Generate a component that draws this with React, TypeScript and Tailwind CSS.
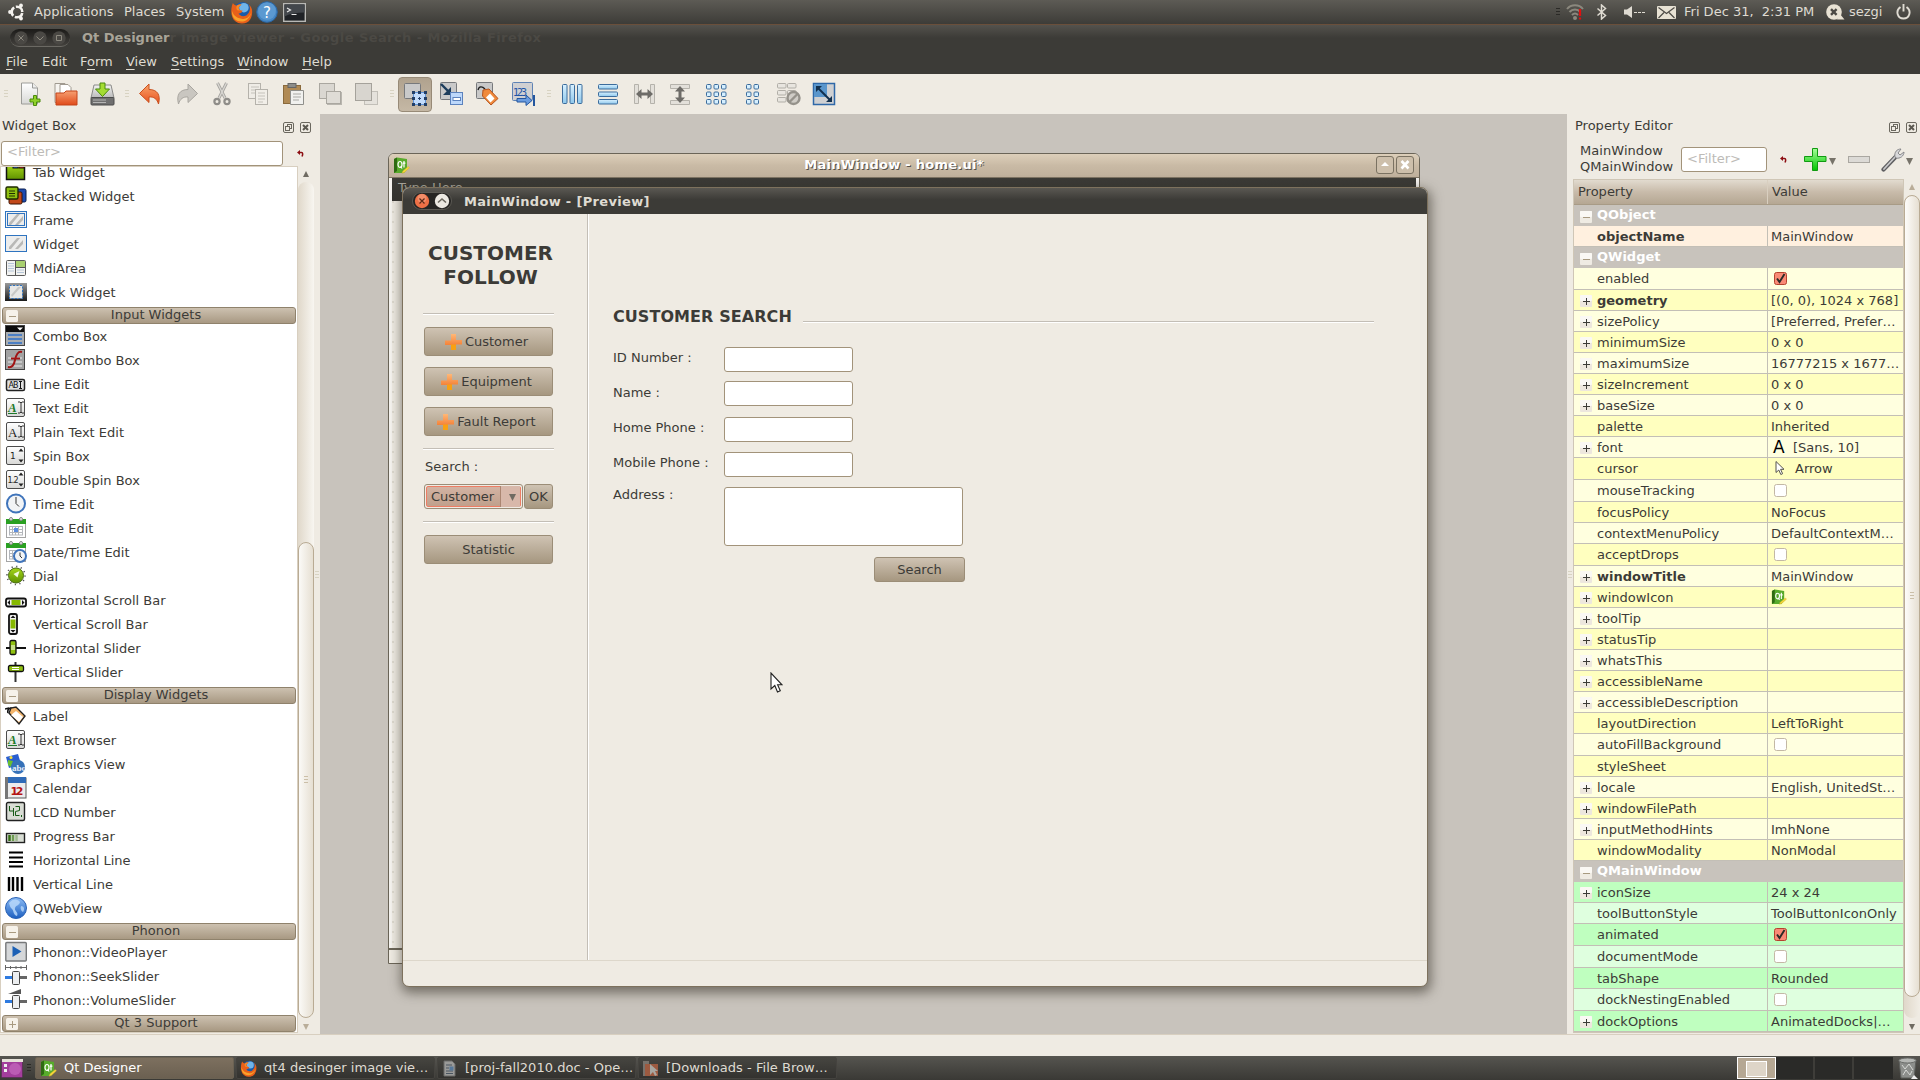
import React from "react";

type Kids = { children?: React.ReactNode };

/* ---------- drawing helpers ---------- */

function Svg({ w, h, children, className = "" }: Kids & { w: number; h: number; className?: string }) {
  return (
    <svg width={w} height={h} viewBox={`0 0 ${w} ${h}`} className={"block shrink-0 " + className}>
      {children}
    </svg>
  );
}

function Defs() {
  const grad = (id: string, a: string, b: string) => (
    <linearGradient id={id} x1="0" y1="0" x2="0" y2="1">
      <stop offset="0" stopColor={a} />
      <stop offset="1" stopColor={b} />
    </linearGradient>
  );
  return (
    <svg width="0" height="0" className="absolute">
      <defs>
        {grad("gOrange", "#f9a56b", "#e8501e")}
        {grad("gFolder", "#f6a072", "#e04a1a")}
        {grad("gGrey", "#f2f2f2", "#b9b9b9")}
        {grad("gGreen", "#a5d61a", "#5f9200")}
        {grad("gBlue", "#8cbcf5", "#1c5fc0")}
        {grad("gCyan", "#d9f1ff", "#8fc8ec")}
        {grad("gPlus", "#a6ff9a", "#00c400")}
        {grad("gPlusO", "#ffb877", "#ef6a1c")}
        {grad("gPaper", "#ffffff", "#d8d8d6")}
        {grad("gDark", "#9a9a9a", "#1a1a1a")}
      </defs>
    </svg>
  );
}

function Handle({ className = "", tone = "#d8d3c2" }: { className?: string; tone?: string }) {
  return (
    <Svg w={4} h={8} className={className}>
      <path d="M0 .5h4M0 3.5h4M0 6.5h4" stroke={tone} />
    </Svg>
  );
}

function Firefox({ s }: { s: number }) {
  return (
    <svg width={s} height={s} viewBox="0 0 24 24" className="block shrink-0">
      <circle cx="13" cy="10" r="9" fill="#1c5aa8" />
      <circle cx="14.500" cy="7" r="5" fill="#6fb4ea" />
      <path d="M2 5c-2 8 0 18 10 18.500C20 24 24 17 23 9c-1-3-2-4-3-5 2 5 0 9-3 11-4 2-7 0-8-2 2 0 4-1 4-3-2 0-4-1-4-3 1-2 2-2 3-3-2-1-4 0-5 1C5 4 4 4 3 2z" fill="#e8601a" />
      <path d="M2 10c0 7 3 11.500 10 11.500 5 0 9-4 10-9-2 5-6 7-10 6C6 18 3 14 2 10z" fill="#f9a32a" />
      <path d="M9 7c1-2 2-2 3-3-2-1-4 0-5 1-1 3 0 5 2 5 2 0 3 0 4 0-2 0-4-1-4-3z" fill="#f68a26" />
    </svg>
  );
}

function QtIcon({ s }: { s: number }) {
  return (
    <svg width={s} height={s} viewBox="0 0 17 17" className="block shrink-0">
      <path d="M1 2l3-1.500 10 1.500v10l-3 4H1z" fill="#58ab2c" />
      <path d="M1 2l3-1.500V14l-3 2z" fill="#2e6b12" />
      <ellipse cx="7" cy="7.500" rx="2" ry="3" fill="none" stroke="#fff" strokeWidth="1.200" />
      <path d="M7.500 9.500l1.600 2M11 4v6.500M9.800 6.200h2.600" stroke="#fff" strokeWidth="1.200" fill="none" />
      <path d="M9 16.300l.8-2.300 5.400-4.500 1.300 1.300-5.200 4.700z" fill="#f4d73a" stroke="#c9a92c" strokeWidth=".4" />
    </svg>
  );
}

function FloatBtn() {
  return (
    <Svg w={11} h={11}>
      <rect x=".5" y=".5" width="10" height="10" rx="1.500" fill="none" stroke="#6b685f" />
      <rect x="4.500" y="2.500" width="4" height="4" fill="none" stroke="#6b685f" />
      <rect x="2.500" y="4.500" width="4" height="4" fill="#efebe3" stroke="#6b685f" />
    </Svg>
  );
}
function CloseBtn() {
  return (
    <Svg w={11} h={11}>
      <rect x=".5" y=".5" width="10" height="10" rx="1.500" fill="none" stroke="#6b685f" />
      <path d="M3 3l5 5M8 3l-5 5" stroke="#5b5850" strokeWidth="2" />
    </Svg>
  );
}
function ResetIcon() {
  return (
    <Svg w={7} h={7}>
      <path d="M0 2.500L3 0v5z" fill="#8c0d12" />
      <path d="M2 2.500h2.500c1.500 0 1.500 2 .5 4" stroke="#8c0d12" strokeWidth="1.500" fill="none" />
    </Svg>
  );
}
function Tri({ up, tone, w = 6 }: { up?: boolean; tone: string; w?: number }) {
  return (
    <Svg w={w} h={w}>
      <path d={up ? `M${w / 2} 0L${w} ${w}H0z` : `M0 0H${w}L${w / 2} ${w}z`} fill={tone} />
    </Svg>
  );
}

/* ---------- top panel ---------- */

function TopPanel() {
  return (
    <div className="flex h-[24px] items-center bg-linear-to-b from-[#5d5b55] to-[#3d3c38] text-[#dfdbd2]">
      <Svg w={17} h={18} className="ml-[8px]">
        <circle cx="9" cy="9" r="5.300" fill="none" stroke="#f4f2ee" strokeWidth="2.600" strokeDasharray="9.300 1.800" strokeDashoffset="-1" />
        <circle cx="2" cy="9" r="1.900" fill="#f4f2ee" />
        <circle cx="13" cy="2.500" r="1.900" fill="#f4f2ee" />
        <circle cx="13" cy="15.500" r="1.900" fill="#f4f2ee" />
      </Svg>
      <span className="ml-[9px] w-[90px] pb-px">Applications</span>
      <span className="w-[52px] pb-px">Places</span>
      <span className="w-[54px] pb-px">System</span>
      <Firefox s={23} />
      <Svg w={22} h={22} className="ml-[3px]">
        <circle cx="11" cy="11" r="10.300" fill="#4587c4" stroke="#2b66a4" />
        <circle cx="11" cy="10" r="8.800" fill="#6ba5da" opacity=".6" />
        <text x="11" y="16.500" textAnchor="middle" fontSize="15" fill="#fff">?</text>
      </Svg>
      <Svg w={23} h={19} className="ml-[5px]">
        <rect x=".7" y=".7" width="21.600" height="17.600" fill="#1f2226" stroke="#b8b8b5" strokeWidth="1.400" />
        <path d="M1.500 1.500h20v8c-8 0-14 1-20 4z" fill="#43474c" />
        <path d="M4 5l3.500 2L4 9M8.500 11.500h5" stroke="#e8e8e8" fill="none" strokeWidth="1.200" />
      </Svg>
      <div className="ml-auto flex items-center">
        <Handle tone="#2b2a27" />
        <Svg w={18} h={16} className="ml-[6px]">
          <path d="M1 5c4-5 12-5 16 0M3.500 8c3-3.500 8-3.500 11 0M6 11c2-2 4-2 6 0" stroke="#8b887e" strokeWidth="2" fill="none" />
          <circle cx="9" cy="14" r="2" fill="#8b887e" />
          <path d="M14 5v7M14 13.500v2" stroke="#e01010" strokeWidth="2.200" />
        </Svg>
        <Svg w={11} h={16} className="ml-[12px]">
          <path d="M1.500 4.500l8 7L5.500 15V1l4 3.500-8 7" stroke="#dfdbd2" strokeWidth="1.500" fill="none" />
        </Svg>
        <Svg w={22} h={12} className="ml-[17px]">
          <path d="M0 3.500h3L8 0v12L3 8.500H0z" fill="#dfdbd2" />
          <path d="M10 6.500h3M14 6.500h3M18 6.500h3" stroke="#dfdbd2" />
        </Svg>
        <Svg w={19} h={13} className="ml-[11px]">
          <rect width="19" height="13" rx="1" fill="#e8e2d4" />
          <path d="M1.500 1.500l8 6 8-6M1.500 12l5.500-5.500M17.500 12L12 6.500" stroke="#4c4a45" strokeWidth="1.200" fill="none" />
        </Svg>
        <span className="ml-[8px] w-[142px] whitespace-pre pb-px">Fri Dec 31,  2:31 PM</span>
        <Svg w={19} h={16}>
          <circle cx="8" cy="8" r="7.800" fill="#e8e2d4" />
          <path d="M11 15.500h7.500L14 10z" fill="#e8e2d4" />
          <path d="M5 5.200l5.600 5.600M10.600 5.200L5 10.800" stroke="#4c4a45" strokeWidth="2.400" />
        </Svg>
        <span className="ml-[4px] w-[47px] pb-px">sezgi</span>
        <Svg w={15} h={16} className="mr-[9px]">
          <path d="M4.500 3C-1 7 1.500 14.500 7.500 14.500S16 7 10.500 3M7.500 0v7.500" stroke="#dfdbd2" strokeWidth="1.900" fill="none" />
        </Svg>
      </div>
    </div>
  );
}

function TitleBar() {
  return (
    <div className="flex h-[27px] items-center border-t border-[#6a4f3b] bg-linear-to-b from-[#54524d] to-[#3c3b37] to-50% font-bold">
      <div className="ml-[10px] flex h-[18px] w-[60px] items-center justify-around rounded-full border-b border-[#6b6963] bg-linear-to-b from-[#1c1b19] to-[#44423e] px-[1px]">
        {["M4 4l5 5M9 4l-5 5", "M3 5l3.500 3.500L10 5", "M4 4h5v5h-5z"].map((d) => (
          <Svg key={d} w={14} h={14}>
            <circle cx="7" cy="7" r="6.700" fill="#4a4844" />
            <path d={d} stroke="#8c897f" fill="none" transform="translate(.5 .5)" />
          </Svg>
        ))}
      </div>
      <span className="ml-[12px] text-[#a8a498]">Qt Designer</span>
      <span className="whitespace-pre tracking-[0.42px] text-[#4b4944]">r image viewer - Google Search - Mozilla Firefox</span>
    </div>
  );
}

const menus: [string, string, string, string][] = [
  ["", "F", "ile", "w-[36px]"],
  ["Ed", "", "it", "w-[38px]"],
  ["F", "o", "rm", "w-[46px]"],
  ["", "V", "iew", "w-[45px]"],
  ["", "S", "ettings", "w-[66px]"],
  ["", "W", "indow", "w-[65px]"],
  ["", "H", "elp", "w-[60px]"],
];

function MenuBar() {
  return (
    <div className="flex h-[23px] items-center bg-[#3c3b37] pb-px pl-[6px] text-[#dfdbd2]">
      {menus.map(([a, u, b, w]) => (
        <span key={a + u + b} className={w}>
          {a}
          <span className="underline underline-offset-[3px]">{u}</span>
          {b}
        </span>
      ))}
    </div>
  );
}

/* ---------- tool bar ---------- */

const greySheet = (x: number, y: number, w = 16, h = 16) => (
  <rect x={x + 0.5} y={y + 0.5} width={w} height={h} rx="1" fill="#c9c9c9" stroke="#77797c" />
);
const bars = (v: boolean, tone = "#3c6c9c", fill = "url(#gCyan)") =>
  [0, 1, 2].map((i) => (
    <rect key={i} x={v ? 2.5 + i * 7.5 : 2.5} y={v ? 2.5 : 2.5 + i * 7.5} width={v ? 4.5 : 19} height={v ? 19 : 4.5} rx="1" fill={fill} stroke={tone} />
  ));
const cells = (cols: number, x0: number) =>
  Array.from({ length: cols * 3 }, (_, k) => (
    <rect key={k} x={x0 + (k % cols) * 7.5} y={2.5 + Math.floor(k / cols) * 7.5} width="4.500" height="4.500" rx="1" fill="#d5efff" stroke="#3c6c9c" />
  ));

const tools: Record<string, React.ReactNode> = {
  newFile: (
    <>
      <path d="M3.500 1h11l5 5v16h-16z" fill="url(#gPaper)" stroke="#9c9c98" />
      <path d="M14.500 1v5h5" fill="#eee" stroke="#9c9c98" />
      <path d="M15.500 13.500h3v3.500H22v3h-3.500v3.500h-3V20H12v-3h3.500z" fill="#8fd12a" stroke="#4b8a0c" />
    </>
  ),
  open: (
    <>
      <path d="M1 1.500h10l3 3v16H1z" fill="#f6f4f0" stroke="#a09a90" />
      <path d="M6 2.500h8l3 3v10H6z" fill="#fff" stroke="#a09a90" />
      <path d="M2 23V11h8l2-2h11v14z" fill="url(#gFolder)" stroke="#c4451a" />
    </>
  ),
  save: (
    <>
      <path d="M4 3h17l3 13H1z" fill="url(#gGrey)" stroke="#8a8a88" />
      <rect x="1" y="15.500" width="23" height="7.500" rx="1" fill="#6f6f6f" stroke="#4c4c4c" />
      <path d="M3 18h13M3 20.500h13" stroke="#b5b5b5" />
      <path d="M10 1h5v6h4.500l-7 7.500-7-7.500H10z" fill="#a4dc32" stroke="#4b8a0c" />
    </>
  ),
  undo: <path d="M11 2v5.500c8 0 12 5 9.500 14.500C19 17 16 14.500 11 15v5.500L1.500 11.500z" fill="url(#gOrange)" stroke="#c9501e" />,
  redo: <path d="M14 2v5.500c-8 0-12 5-9.500 14.500C6 17 9 14.500 14 15v5.500l9.500-9z" fill="#c9c6c0" stroke="#a9a6a0" />,
  cut: (
    <>
      <path d="M7.500 1l7.500 15M16.500 1L9 16" stroke="#a8a6a1" strokeWidth="3" />
      <path d="M7.500 1l7.500 15M16.500 1L9 16" stroke="#dad8d4" strokeWidth="1.200" />
      <circle cx="7" cy="19.500" r="2.600" fill="none" stroke="#8f8d89" strokeWidth="2.200" />
      <circle cx="17" cy="19.500" r="2.600" fill="none" stroke="#8f8d89" strokeWidth="2.200" />
    </>
  ),
  copy: (
    <>
      <rect x="2.500" y="1.500" width="12" height="15" fill="#efece6" stroke="#b5b2ab" />
      <path d="M5 5h8M5 8h8M5 11h4" stroke="#c5c2bb" />
      <rect x="9.500" y="7.500" width="12" height="15" fill="#f1eee8" stroke="#b5b2ab" />
      <path d="M12 11h7M12 14h7M12 17h7M12 20h5" stroke="#c5c2bb" />
    </>
  ),
  paste: (
    <>
      <rect x="1.500" y="3.500" width="17" height="18" fill="#b08a55" stroke="#8a6a3c" />
      <rect x="6" y="1.500" width="8" height="4" fill="#8d8d8a" stroke="#666" />
      <path d="M8.500 8.500h13v14h-13z" fill="#f1f1ef" stroke="#8f8f8b" />
      <path d="M11 12h8M11 15h8M11 18h6" stroke="#a9a9a5" />
    </>
  ),
  raise: (
    <>
      <rect x="9.500" y="10.500" width="14" height="12" fill="#e5e2dc" stroke="#b9b6af" />
      <rect x="1.500" y="1.500" width="15" height="15" fill="#dad7d1" stroke="#aaa7a0" />
      <rect x="8.500" y="9.500" width="14" height="12" fill="#dfdcd6" stroke="#aaa7a0" />
    </>
  ),
  lower: (
    <>
      <rect x="10.500" y="9.500" width="13" height="13" fill="#e5e2dc" stroke="#c2bfb8" />
      <rect x="1.500" y="1.500" width="16" height="17" fill="#d8d5cf" stroke="#a5a29b" />
    </>
  ),
  editWidgets: (
    <>
      {greySheet(1, 1, 16, 15)}
      <rect x="10.500" y="10.500" width="12" height="12" fill="#c3dcfb" stroke="#5f93d8" />
      <path d="M16.500 15v3M15 16.500h3" stroke="#24406c" />
      {[[9, 9], [15, 9], [21, 9], [9, 15], [21, 15], [9, 21], [15, 21], [21, 21]].map(([x, y]) => (
        <rect key={x + "-" + y} x={x} y={y} width="3" height="3" fill="#233f66" />
      ))}
    </>
  ),
  signals: (
    <>
      {greySheet(1, 0, 16, 17)}
      <path d="M2 2l8 8" stroke="#1d3d5c" strokeWidth="2.400" />
      <path d="M12 5v8H4z" fill="#1d3d5c" />
      <rect x="11.500" y="10.500" width="12" height="12" fill="#bdd8fb" stroke="#5c82bd" />
      <rect x="14" y="15.500" width="7.500" height="3" fill="#fff" stroke="#5c82bd" />
    </>
  ),
  buddies: (
    <>
      {greySheet(1, 0, 16, 16)}
      <path d="M3 8c1-4 4-4 7-1" stroke="#222" fill="none" strokeWidth="1.400" />
      <path d="M8 8l6-1 9 9.500-7 6.500-8.500-9z" fill="#f08a3c" stroke="#b5531c" />
      <path d="M15 11.500l4.500 5-4 4-4.500-5z" fill="#fff" />
    </>
  ),
  tabOrder: (
    <>
      <rect x="1.500" y=".5" width="20" height="18" rx="1" fill="#d0d0d2" stroke="#5f83b5" />
      <text x="2" y="14" fontSize="10" fill="#1f55a8" textLength="14">123</text>
      <path d="M6 16.500h9V13l6 5.500-6 5V20H6z" fill="#6a9ce0" stroke="#24569e" />
      <path d="M23 13v11" stroke="#24569e" strokeWidth="2" />
    </>
  ),
  hLayout: bars(true),
  vLayout: bars(false),
  hSplit: (
    <>
      <path d="M2.500 2.500h4v19h-4zM18.500 2.500h4v19h-4z" fill="#e3e0da" stroke="#b5b2ab" />
      <path d="M4 12l5.500-5v3.500h6V7l5.500 5-5.500 5v-3.500h-6V17z" fill="#6e6c68" />
    </>
  ),
  vSplit: (
    <>
      <path d="M2.500 2.500h19v4h-19zM2.500 18.500h19v4h-19z" fill="#e3e0da" stroke="#b5b2ab" />
      <path d="M12 4l5 5.500h-3.500v6H17L12 21l-5-5.500h3.500v-6H7z" fill="#6e6c68" />
    </>
  ),
  grid: cells(3, 2.5),
  form: cells(2, 6.5),
  breakLayout: (
    <>
      {[0, 7, 14].map((y) =>
        [1, 11].map((x) => <rect key={x + "," + y} x={x + 0.5} y={y + 1.5} width="8.500" height="4.500" rx="1" fill="#e8e5df" stroke="#b1aea7" />),
      )}
      <circle cx="17.500" cy="16" r="6" fill="#cfccc6" stroke="#95928b" strokeWidth="2.400" />
      <path d="M13.500 20l8-8" stroke="#95928b" strokeWidth="2.400" />
    </>
  ),
  adjust: (
    <>
      <rect x="1.500" y="1.500" width="21" height="21" fill="#cfd0d2" stroke="#2f68a8" strokeWidth="1.500" />
      <rect x="2" y="2" width="13" height="13" fill="#5a96cc" />
      <path d="M5 5l14 14" stroke="#12304e" strokeWidth="2" />
      <path d="M4 4h6L4 10zM20 20h-6l6-6z" fill="#12304e" />
    </>
  ),
};

const groups: { names: string[]; gap: string }[] = [
  { names: ["newFile", "open", "save"], gap: "ml-[5px] w-[112px]" },
  { names: ["undo", "redo", "cut", "copy", "paste", "raise", "lower"], gap: "ml-[4px] w-[257px]" },
  { names: ["editWidgets", "signals", "buddies", "tabOrder"], gap: "ml-[4px] w-[149px]" },
  { names: ["hLayout", "vLayout", "hSplit", "vSplit", "grid", "form", "breakLayout", "adjust"], gap: "ml-[4px]" },
];

function ToolBar() {
  return (
    <div className="flex h-[40px] items-center bg-[#efebe3] pl-[4px]">
      {groups.map((g) => (
        <React.Fragment key={g.gap}>
          <Handle />
          <div className={"flex items-center gap-[2px] " + g.gap}>
            {g.names.map((n) => (
              <div
                key={n}
                className={
                  n === "editWidgets"
                    ? "flex h-[35px] w-[34px] items-center justify-center rounded-[4px] border border-[#978a77] bg-linear-to-b from-[#b0a28e] to-[#c5b8a5]"
                    : "flex h-[35px] w-[34px] items-center justify-center"
                }
              >
                <Svg w={25} h={24}>{tools[n]}</Svg>
              </div>
            ))}
          </div>
        </React.Fragment>
      ))}
    </div>
  );
}

/* ---------- widget box ---------- */

const box = <rect x="1.500" y="1.500" width="18" height="18" rx="1.500" fill="url(#gPaper)" stroke="#4c4c4c" />;
const stripes = <path d="M4 14L12 5h3L6 16H4zM10 16L18 7v4l-5 5z" fill="#b9b9b7" />;
const ibeam = <path d="M13 5h2l1 1 1-1h2M13 16h2l1-1 1 1h2M16 6v9" stroke="#333" fill="none" />;
const spin = <path d="M13.500 6.500l2.500-3 2.500 3zM13.500 14.500l2.500 3 2.500-3z" fill="#222" />;
const cal = (
  <>
    <rect x="1.500" y="4.500" width="19" height="16" fill="#fff" stroke="#a5a5a5" />
    <rect x="1" y="2" width="20" height="5" fill="#2aa022" />
    <circle cx="6" cy="2" r="1.500" fill="#eee" stroke="#888" />
    <circle cx="16" cy="2" r="1.500" fill="#eee" stroke="#888" />
    <path d="M4 9.500h14M4 12.500h14M4 15.500h14M4 18h14M4.500 9v9M7.500 9v9M10.500 9v9M13.500 9v9M17.500 9v9" stroke="#b3b6bb" />
  </>
);
const clock = (cx: number, cy: number, r: number) => (
  <>
    <circle cx={cx} cy={cy} r={r} fill="#f2f4f6" stroke="#3f74bb" strokeWidth="2" />
    <path d={`M${cx} ${cy - r + 2.5}V${cy}l${r / 3} ${r / 3}`} stroke="#333" fill="none" />
  </>
);
const slider = (
  <>
    <path d="M0 12.500h8" stroke="#2f7be0" strokeWidth="3" />
    <path d="M14 12.500h8" stroke="#666" strokeWidth="3" />
    <rect x="7.500" y="6.500" width="7" height="13" rx="1" fill="#eceef0" stroke="#444" />
  </>
);
const richText = (
  <>
    {box}
    <text x="3" y="15" fontSize="13" fontStyle="italic" fontFamily="Liberation Serif, serif" fontWeight="bold" fill="#1f7a2c">A</text>
    <path d="M3 16.500h9" stroke="#1f7a2c" />
    {ibeam}
  </>
);

const widgetIcons: Record<string, React.ReactNode> = {
  "Tab Widget": (
    <>
      <rect x="1.500" y="3.500" width="18" height="15" fill="url(#gGreen)" stroke="#111" strokeWidth="1.500" />
      <rect x="8" y="3" width="5" height="4" fill="#2a6ae0" stroke="#111" />
      <rect x="14" y="3" width="5" height="4" fill="#e02020" stroke="#111" />
    </>
  ),
  "Stacked Widget": (
    <>
      <rect x="9" y="4" width="12" height="13" rx="1.500" fill="#1c4ab0" stroke="#0b1d4c" />
      <rect x="4" y="7" width="13" height="12" rx="1.500" fill="#c2481a" stroke="#3c1405" />
      <rect x="1" y="2" width="12" height="12" rx="1.500" fill="#8fc010" stroke="#1e2b00" strokeWidth="1.400" />
      <path d="M4 6h6M4 8.500h6M4 11h6" stroke="#1e3000" />
    </>
  ),
  Frame: (
    <>
      <rect x=".5" y="2.500" width="21" height="16" fill="#f2f2f1" stroke="#2f74c0" />
      <rect x="2.500" y="4.500" width="17" height="12" fill="#ededec" stroke="#2f74c0" />
      {stripes}
    </>
  ),
  Widget: (
    <>
      <rect x=".5" y="2.500" width="21" height="16" fill="#ededec" stroke="#2f74c0" />
      {stripes}
    </>
  ),
  MdiArea: (
    <>
      <rect x="1.500" y="3.500" width="19" height="15" rx="1" fill="#f2f2f0" stroke="#5b5b5b" />
      <rect x="11" y="4" width="9" height="6" fill="#a9d070" />
      <path d="M10.500 4v14M11 10.500h9" stroke="#555" />
      <path d="M3 6.500h6M3 9h6M3 11.500h6M3 14h6M12 13h7M12 15.500h7" stroke="#b5c5d8" />
    </>
  ),
  "Dock Widget": (
    <>
      <rect x="0" y="2" width="22" height="18" fill="url(#gDark)" />
      <rect x="4.500" y="4.500" width="13" height="13" fill="#e8e8e6" stroke="#2f74c0" strokeDasharray="2 1.500" />
      <path d="M6 14l7-8h3l-9 10z" fill="#c9c9c6" />
    </>
  ),
  "Combo Box": (
    <>
      <rect x=".5" y=".5" width="19" height="20" fill="#a9aeb3" stroke="#444" />
      <rect x="1" y="1" width="18" height="6" fill="#0c0c0c" />
      <path d="M12 2.500h6l-3 3z" fill="#fff" />
      <path d="M3 10h14M3 14h14M3 18h14" stroke="#4c7fc4" strokeWidth="2" />
    </>
  ),
  "Font Combo Box": (
    <>
      <rect x=".5" y=".5" width="19" height="20" fill="#a2a2a2" stroke="#444" />
      <path d="M3 9h14M3 13h14M3 17h14" stroke="#c6c6c6" strokeWidth="2" />
      <path d="M17 3c-4-1-6 3-7 8s-3 8-7 7M6 9.500h9" stroke="#a01414" strokeWidth="2" fill="none" />
    </>
  ),
  "Line Edit": (
    <>
      <rect x="1.500" y="6.500" width="18" height="11" rx="1.500" fill="#e0e0e0" stroke="#222" strokeWidth="1.500" />
      <text x="3.500" y="15" fontSize="8" fill="#111" textLength="10">AB</text>
      <path d="M14 8.500h3M15.500 8.500v7M14 15.500h3" stroke="#111" />
    </>
  ),
  "Text Edit": richText,
  "Plain Text Edit": (
    <>
      {box}
      <text x="3" y="15.500" fontSize="13" fontFamily="Liberation Serif, serif" fill="#222">A</text>
      {ibeam}
    </>
  ),
  "Spin Box": (
    <>
      {box}
      <text x="5" y="14" fontSize="9" fill="#222">1</text>
      {spin}
    </>
  ),
  "Double Spin Box": (
    <>
      {box}
      <text x="2.500" y="14" fontSize="8" fill="#222" textLength="11">1.2</text>
      {spin}
    </>
  ),
  "Time Edit": clock(11, 10.5, 9),
  "Date Edit": (
    <>
      {cal}
      <rect x="9" y="11" width="4" height="4" fill="#5e8fe0" />
    </>
  ),
  "Date/Time Edit": (
    <>
      {cal}
      {clock(15, 15, 6)}
    </>
  ),
  Dial: (
    <>
      <circle cx="11" cy="10.500" r="9" fill="none" stroke="#555" strokeWidth="1.600" strokeDasharray="1.200 3.500" />
      <circle cx="11" cy="10.500" r="7.500" fill="url(#gGreen)" stroke="#4a6e12" />
      <path d="M14.500 6l-2 6.500-4-3.500z" fill="#f2fbe0" />
    </>
  ),
  "Horizontal Scroll Bar": (
    <>
      <rect x="1" y="9.500" width="20" height="8" rx="2" fill="#f1f1f1" stroke="#111" strokeWidth="1.800" />
      <rect x="6.500" y="11" width="9" height="5" fill="#86b800" />
      <path d="M5 11v5l-2.500-2.500zM17 11v5l2.500-2.500z" fill="#111" />
    </>
  ),
  "Vertical Scroll Bar": (
    <>
      <rect x="4" y="1" width="8" height="20" rx="2" fill="#f1f1f1" stroke="#111" strokeWidth="1.800" />
      <rect x="5.500" y="6.500" width="5" height="9" fill="#86b800" />
      <path d="M5.500 5h5L8 2.500zM5.500 17h5L8 19.500z" fill="#111" />
    </>
  ),
  "Horizontal Slider": (
    <>
      <path d="M1 11h20" stroke="#111" strokeWidth="2" />
      <rect x="5" y="3.500" width="6" height="14" rx="1.500" fill="#8fc010" stroke="#111" strokeWidth="1.300" />
      <path d="M7 8v5M9 8v5" stroke="#fff" />
    </>
  ),
  "Vertical Slider": (
    <>
      <path d="M10.500 1v20" stroke="#333" strokeWidth="2" />
      <rect x="3.500" y="4.500" width="15" height="6" rx="1.500" fill="#8fc010" stroke="#111" strokeWidth="1.300" />
      <path d="M7 6.500h7M7 8.500h7" stroke="#fff" />
    </>
  ),
  Label: (
    <>
      <path d="M0 4l4-1M3 8c-1-4 2-6 5-4" stroke="#111" strokeWidth="1.600" fill="none" />
      <path d="M4 8l2-5 5-1 9 9-6 8z" fill="#f3b56c" stroke="#222" strokeWidth="1.400" />
      <path d="M11 6l7 6-4 5-8-7z" fill="#fff" />
    </>
  ),
  "Text Browser": richText,
  "Graphics View": (
    <>
      <path d="M1 4l12-3 3 10-12 4z" fill="#2a5fd0" />
      <path d="M3 7l5 1-2 6-3-2z" fill="#6abf30" />
      <circle cx="6" cy="4.500" r="1.500" fill="#f8e03c" />
      <circle cx="13" cy="14" r="7" fill="#3571b8" />
      <text x="7" y="18" fontSize="9" fontFamily="Liberation Serif, serif" fontWeight="bold" fill="#e8eef8">abc</text>
    </>
  ),
  Calendar: (
    <>
      <rect x="1" y="1" width="20" height="20" fill="#ececec" stroke="#5a5a5a" />
      <path d="M0 0h3v22H0z" fill="#777" />
      <rect x="3" y="0" width="18" height="6" fill="#2f6bb8" />
      <text x="5.500" y="18" fontSize="11" fontWeight="bold" fill="#b51414" textLength="13">12</text>
    </>
  ),
  "LCD Number": (
    <>
      <rect x="1.500" y="1.500" width="18" height="18" rx="1.500" fill="#d8dcd4" stroke="#222" strokeWidth="1.400" />
      <path d="M4.500 5v5h4M8.500 7v8M10.500 5.500h4v4l-4 1v4h4M16.500 14v2" stroke="#155a15" fill="none" />
    </>
  ),
  "Progress Bar": (
    <>
      <rect x="1.500" y="8.500" width="18" height="9" fill="#d8ddd4" stroke="#222" strokeWidth="1.400" />
      <path d="M4.500 10v6" stroke="#356d12" strokeWidth="2.500" />
      <path d="M8 10v6" stroke="#6d9c50" strokeWidth="2.500" />
      <path d="M11.500 10v6" stroke="#a0b890" strokeWidth="2.500" />
    </>
  ),
  "Horizontal Line": <path d="M4 3.500h14M4 8.500h14M4 13h14M4 17.500h14" stroke="#000" strokeWidth="2" />,
  "Vertical Line": <path d="M4 4v14M8 4v14M12.500 4v14M17 4v14" stroke="#000" strokeWidth="2.400" />,
  QWebView: (
    <>
      <circle cx="11" cy="11" r="10.500" fill="url(#gBlue)" stroke="#2a62b5" />
      <path d="M4 6c4-5 9-4 11-1-1 4-4 3-5 6s4 4 2 8c-4-1-3-5-5-7S5 9 4 6z" fill="#b8d8fa" opacity=".85" />
      <path d="M16 9c3 0 4 3 2 6-2-1-3-4-2-6z" fill="#b8d8fa" opacity=".8" />
    </>
  ),
  "Phonon::VideoPlayer": (
    <>
      <rect x=".8" y="1.500" width="20.500" height="18.500" rx="1" fill="#d5d7d9" stroke="#77797b" strokeWidth="1.400" />
      <path d="M7.500 5l9 5.500-9 5.500z" fill="#1c60b5" />
    </>
  ),
  "Phonon::SeekSlider": (
    <>
      <path d="M0 2.500h22M.5 0v5M5.500 1v3M11 1v3M16 1v3M21.500 0v5" stroke="#666" fill="none" />
      {slider}
    </>
  ),
  "Phonon::VolumeSlider": (
    <>
      <path d="M3 5l13-5v5z" fill="#555" />
      {slider}
    </>
  ),
};

const widgetList = [
  "Tab Widget", "Stacked Widget", "Frame", "Widget", "MdiArea", "Dock Widget",
  "-Input Widgets", "Combo Box", "Font Combo Box", "Line Edit", "Text Edit", "Plain Text Edit", "Spin Box",
  "Double Spin Box", "Time Edit", "Date Edit", "Date/Time Edit", "Dial", "Horizontal Scroll Bar",
  "Vertical Scroll Bar", "Horizontal Slider", "Vertical Slider",
  "-Display Widgets", "Label", "Text Browser", "Graphics View", "Calendar", "LCD Number", "Progress Bar",
  "Horizontal Line", "Vertical Line", "QWebView",
  "-Phonon", "Phonon::VideoPlayer", "Phonon::SeekSlider", "Phonon::VolumeSlider",
  "+Qt 3 Support",
];

function WidgetBox() {
  return (
    <div className="flex w-[320px] shrink-0 bg-[#efebe3]">
      <div className="flex w-[314px] flex-col">
        <div className="flex h-[26px] items-center pl-[2px]">
          <span className="w-[281px] pb-[2px]">Widget Box</span>
          <FloatBtn />
          <span className="w-[6px]" />
          <CloseBtn />
        </div>
        <div className="flex h-[26px] items-center">
          <div className="ml-px flex h-[25px] w-[282px] items-center rounded-[3px] border border-[#a2937a] bg-white pb-[2px] pl-[5px] text-[#bdbbb7]">&lt;Filter&gt;</div>
          <span className="w-[14px]" />
          <ResetIcon />
        </div>
        <div className="flex h-[867px]">
          <div className="flex w-[298px] flex-col justify-end overflow-hidden border border-[#d8cfc0] bg-white">
            {widgetList.map((n) =>
              n[0] === "-" || n[0] === "+" ? (
                <div key={n} className="flex h-[20px] shrink-0 items-center pl-px pt-[2px]">
                  <div className="flex h-[17px] w-[294px] items-center rounded-[3px] border border-[#8f826c] bg-linear-to-b from-[#cdc1b0] to-[#a89983] pl-[3px]">
                    <Svg w={12} h={12} className="mt-[2px]">
                      <rect width="12" height="12" rx="1.500" fill="#f6f2ea" />
                      <path d={n[0] === "-" ? "M3 6.500h7" : "M3 6.500h7M6.500 3v7"} stroke="#a89a80" />
                    </Svg>
                    <span className="flex-1 pr-px pb-px text-center">{n.slice(1)}</span>
                  </div>
                </div>
              ) : (
                <div key={n} className="flex h-[24px] shrink-0 items-center pl-[4px]">
                  <Svg w={22} h={22}>{widgetIcons[n]}</Svg>
                  <span className="pl-[6px] pt-px">{n}</span>
                </div>
              ),
            )}
          </div>
          <div className="flex w-[16px] flex-col items-center pt-[5px]">
            <Tri up tone="#6f6b62" />
            <div className="mt-[5px] flex h-[836px] w-[16px] flex-col justify-end rounded-[8px] bg-linear-to-r from-[#e0d8ca] to-[#f8f6f1]">
              <div className="flex h-[476px] items-center justify-center rounded-[8px] border border-[#b9ab94] bg-linear-to-r from-[#fbfaf7] to-[#e6dfd2]">
                <Handle tone="#cbbfa8" />
              </div>
            </div>
            <div className="mt-[6px]"><Tri tone="#b9ad99" /></div>
          </div>
        </div>
      </div>
      <Handle className="ml-px mt-[457px]" />
    </div>
  );
}

/* ---------- property editor ---------- */

type Prop = [name: string, value?: string, flags?: string];
// flags: g = group header, p = expandable, b = bold, c = checkbox, k = checked, f/a/q = font, arrow and Qt value icons
const props: Prop[] = [
  ["QObject", "", "g"],
  ["objectName", "MainWindow", "b"],
  ["QWidget", "", "g"],
  ["enabled", "", "ck"],
  ["geometry", "[(0, 0), 1024 x 768]", "pb"],
  ["sizePolicy", "[Preferred, Prefer…", "p"],
  ["minimumSize", "0 x 0", "p"],
  ["maximumSize", "16777215 x 1677…", "p"],
  ["sizeIncrement", "0 x 0", "p"],
  ["baseSize", "0 x 0", "p"],
  ["palette", "Inherited", ""],
  ["font", "[Sans, 10]", "pf"],
  ["cursor", "Arrow", "a"],
  ["mouseTracking", "", "c"],
  ["focusPolicy", "NoFocus", ""],
  ["contextMenuPolicy", "DefaultContextM…", ""],
  ["acceptDrops", "", "c"],
  ["windowTitle", "MainWindow", "pb"],
  ["windowIcon", "", "pq"],
  ["toolTip", "", "p"],
  ["statusTip", "", "p"],
  ["whatsThis", "", "p"],
  ["accessibleName", "", "p"],
  ["accessibleDescription", "", "p"],
  ["layoutDirection", "LeftToRight", ""],
  ["autoFillBackground", "", "c"],
  ["styleSheet", "", ""],
  ["locale", "English, UnitedSt…", "p"],
  ["windowFilePath", "", "p"],
  ["inputMethodHints", "ImhNone", "p"],
  ["windowModality", "NonModal", ""],
  ["QMainWindow", "", "g"],
  ["iconSize", "24 x 24", "p"],
  ["toolButtonStyle", "ToolButtonIconOnly", ""],
  ["animated", "", "ck"],
  ["documentMode", "", "c"],
  ["tabShape", "Rounded", ""],
  ["dockNestingEnabled", "", "c"],
  ["dockOptions", "AnimatedDocks|…", "p"],
  ["", "", ""],
];

function rowTone(i: number) {
  if (i === 1) return "bg-[#fff0df]";
  if (i < 31) return i % 2 ? "bg-[#ffffdf]" : "bg-[#ffffbf]";
  return i % 2 ? "bg-[#dfffdf]" : "bg-[#bfffbf]";
}

function Expander({ minus }: { minus?: boolean }) {
  return (
    <Svg w={12} h={12} className="mt-[2px]">
      <rect width="12" height="12" rx="1" fill={minus ? "#efebe3" : "#ede7de"} />
      <rect width="12" height="6" rx="1" fill="#faf8f4" />
      <path d={minus ? "M3 6.500h7" : "M3 6.500h7M6.500 3v7"} stroke={minus ? "#a89a80" : "#3c3b37"} />
    </Svg>
  );
}

function ValueIcon({ f }: { f: string }) {
  if (f.includes("c"))
    return (
      <Svg w={13} h={13} className="ml-[3px]">
        <rect x=".5" y=".5" width="12" height="12" rx="2" fill={f.includes("k") ? "#f98a76" : "#fff"} stroke={f.includes("k") ? "#b5432f" : "#c3b8a5"} />
        {f.includes("k") && <path d="M3 6.500l2.500 3.500L10.500 2" stroke="#2b2a27" strokeWidth="1.900" fill="none" />}
      </Svg>
    );
  if (f.includes("f")) return <span className="ml-[2px] w-[20px] text-[17px] leading-none text-black">A</span>;
  if (f.includes("a"))
    return (
      <Svg w={24} h={17}>
        <path d="M5 1.500v11l2.800-2.500 2 4.500 1.800-.8-2-4.400h3.400z" fill="#fff" stroke="#55534d" />
      </Svg>
    );
  if (f.includes("q"))
    return (
      <div className="mb-px">
        <QtIcon s={16} />
      </div>
    );
  return null;
}

function PropertyEditor() {
  return (
    <div className="flex w-[353px] shrink-0 bg-[#efebe3]">
      <Handle className="ml-px mt-[457px]" />
      <div className="ml-px flex w-[347px] flex-col">
        <div className="flex h-[26px] items-center pl-[2px]">
          <span className="w-[314px] pb-[2px]">Property Editor</span>
          <FloatBtn />
          <span className="w-[6px]" />
          <CloseBtn />
        </div>
        <div className="flex h-[39px] items-center">
          <div className="w-[108px] pb-[2px] pl-[7px] leading-[16px] tracking-[0.06px]">
            MainWindow
            <br />
            QMainWindow
          </div>
          <div className="flex h-[25px] w-[86px] items-center rounded-[3px] border border-[#a2937a] bg-white pb-[2px] pl-[5px] text-[#bdbbb7]">&lt;Filter&gt;</div>
          <span className="w-[13px]" />
          <ResetIcon />
          <Svg w={23} h={23} className="ml-[17px]">
            <path d="M8.500.5h5v8h8.500v5h-8.500v9h-5v-9H.5v-5h8z" fill="url(#gPlus)" stroke="#119a11" />
          </Svg>
          <div className="ml-[2px] mt-[4px]"><Tri tone="#77736a" w={7} /></div>
          <Svg w={22} h={7} className="ml-[12px]">
            <rect x=".5" y=".5" width="21" height="6" fill="#dcdad6" stroke="#aaa7a1" />
          </Svg>
          <Svg w={24} h={25} className="ml-[11px]">
            <path d="M2.500 22.500L15 9.500" stroke="#5f5f62" strokeWidth="4.200" strokeLinecap="round" />
            <path d="M3 22L15 9" stroke="#c9c9cb" strokeWidth="1.800" strokeLinecap="round" />
            <path d="M14 10c-1-5 2-8 6-8l-3 4 2 2 4-3c0 4-4 7-8 6z" fill="#d8d8da" stroke="#88888b" />
          </Svg>
          <div className="ml-px mt-[4px]"><Tri tone="#77736a" w={7} /></div>
        </div>
        <div className="flex h-[854px]">
          <div className="flex w-[331px] flex-col overflow-hidden border border-[#cfc6b6]">
            <div className="flex h-[25px] shrink-0 items-center border-b border-[#a89b86] bg-linear-to-b from-[#e2dbcf] via-[#c8bbaa] to-[#b5a793]">
              <span className="flex h-full w-[194px] items-center border-r border-[#d9cfc0] pl-[4px]">Property</span>
              <span className="pl-[4px]">Value</span>
            </div>
            {props.map(([name, value, flags = ""], i) =>
              flags === "g" ? (
                <div key={name} className="flex h-[21px] shrink-0 items-center bg-[#c8c3bc] pl-[6px] font-bold text-white">
                  <Expander minus />
                  <span className="pb-px pl-[5px]">{name}</span>
                </div>
              ) : (
                <div key={name} className={(/[ca]/.test(flags) ? "flex h-[22px] shrink-0 border-b border-[#c3bfb6] " : "flex h-[21px] shrink-0 border-b border-[#c3bfb6] ") + rowTone(i)}>
                  <div className="flex w-[194px] items-center border-r border-[#c3bfb6] pl-[6px]">
                    <div className="w-[17px]">{flags.includes("p") && <Expander />}</div>
                    <span className={flags.includes("b") ? "pt-px font-bold" : "pt-px"}>{name}</span>
                  </div>
                  <div className="flex flex-1 items-center whitespace-nowrap pl-[3px]">
                    <ValueIcon f={flags} />
                    <span className="pt-px">{value}</span>
                  </div>
                </div>
              ),
            )}
          </div>
          <div className="flex w-[16px] flex-col items-center pt-[5px]">
            <Tri up tone="#b9ad99" />
            <div className="mt-[5px] h-[823px] w-[16px] rounded-[8px] bg-linear-to-r from-[#e0d8ca] to-[#f1ede5]">
              <div className="flex h-[802px] items-center justify-center rounded-[8px] border border-[#b9ab94] bg-linear-to-r from-[#fdfcfa] to-[#e6dfd2]">
                <Handle tone="#cbbfa8" />
              </div>
            </div>
            <div className="mt-[6px]"><Tri tone="#6f6b62" /></div>
          </div>
        </div>
      </div>
    </div>
  );
}

/* ---------- form windows ---------- */

const rule = "h-[2px] border-t border-[#c3beb6] bg-white";
const btn = "flex items-center justify-center rounded-[3px] border border-[#9b8d77] bg-linear-to-b from-[#cfc3b3] to-[#a69780]";
const field = "w-[129px] h-[25px] rounded-[3px] border border-[#a2937a] bg-white";

function DesignWindow() {
  return (
    <div className="absolute left-[68px] top-[39px] flex h-[811px] w-[1032px] flex-col rounded-t-[6px] border border-[#6b6558] bg-[#efebe3]">
      <div className="flex h-[24px] shrink-0 items-center rounded-t-[5px] border-b border-[#7d7363] bg-linear-to-b from-[#ddcfba] via-[#c9baa5] via-50% to-[#bfb09c] pb-px pl-[4px] pr-[5px]">
        <QtIcon s={17} />
        <span className="flex-1 pl-px text-center font-bold tracking-[0.25px] text-white [text-shadow:1px_1px_0_#55504a]">
          <span className="pr-[16px]">MainWindow - home.ui*</span>
        </span>
        {["M5 10l4-4 4 4z", "M5.500 5l7 7.500M12.500 5l-7 7.500"].map((d, i) => (
          <Svg key={d} w={18} h={18} className={i ? "ml-[2px]" : "ml-[-17px]"}>
            <rect x=".5" y=".5" width="17" height="17" rx="2.500" fill="#cdbfab" stroke="#7b7262" />
            <path d={d} fill={i ? "none" : "#fff"} stroke={i ? "#fff" : "none"} strokeWidth="2.600" />
          </Svg>
        ))}
      </div>
      <div className="flex flex-1 flex-col border-x-[3px] border-[#f5f3ef]">
        <div className="h-[23px] bg-linear-to-b from-[#3c3b37] to-[#32312e] pl-[6px] pt-px text-[#a9a69c]">Type Here</div>
        <div className="flex-1 bg-[radial-gradient(circle_at_1px_1px,#d5d0c6_0.6px,transparent_0.9px)] bg-[length:10px_10px]" />
      </div>
      <div className="h-[15px] border-t-2 border-[#6b6558]" />
    </div>
  );
}

function OrangePlus() {
  return (
    <Svg w={17} h={16} className="mr-[3px]">
      <path d="M6 0h5v6h6v4.500h-6V16H6v-5H0V6.500h6z" fill="url(#gPlusO)" />
      <path d="M6 10.500h5V16H6z" fill="#f8a012" />
    </Svg>
  );
}

const fields: [string, string, string][] = [
  ["ID Number :", "mt-[19px]", "mb-[4px]"],
  ["Name :", "mt-[9px]", "mb-[2px]"],
  ["Home Phone :", "mt-[11px]", "mb-[3px]"],
  ["Mobile Phone :", "mt-[10px]", "mb-[3px]"],
];

function PreviewWindow() {
  return (
    <div className="absolute left-[82px] top-[73px] flex h-[800px] w-[1026px] flex-col overflow-hidden rounded-[7px] border border-[#7d715d] bg-[#efebe3] shadow-[1px_4px_12px_2px_rgba(60,55,45,0.6)]">
      <div className="flex h-[26px] shrink-0 items-center bg-linear-to-b from-[#5a5852] to-[#3c3b37] to-45% font-bold text-[#dfdbd2]">
        <Svg w={40} h={18} className="ml-[9px]">
          <rect x=".5" y=".5" width="39" height="17" rx="8.500" fill="#262523" stroke="#5c5a54" />
          <circle cx="10" cy="9" r="7.200" fill="#ee7046" />
          <circle cx="10" cy="6.500" r="4.500" fill="#f7a080" opacity=".6" />
          <path d="M7.500 6.500l5 5M12.500 6.500l-5 5" stroke="#5c2a18" strokeWidth="1.200" />
          <circle cx="30" cy="9" r="7.200" fill="#ece9e2" />
          <path d="M26 10.500l4-3.500 4 3.500" stroke="#6b685f" strokeWidth="1.600" fill="none" />
        </Svg>
        <span className="ml-[12px] pt-px tracking-[0.33px]">MainWindow - [Preview]</span>
      </div>
      <div className="flex h-[746px]">
        <div className="flex w-[185px] flex-col border-r border-[#c3beb6] pl-[20px] pt-[27px]">
          <div className="ml-[2px] w-[131px] text-center text-[20px] font-bold leading-[24px]">
            CUSTOMER
            <br />
            FOLLOW
          </div>
          <div className={rule + " mt-[24px] w-[131px]"} />
          <div className="ml-px mt-[12px] flex w-[129px] flex-col gap-[11px]">
            {["Customer", "Equipment", "Fault Report"].map((t) => (
              <div key={t} className={btn + " h-[29px] pr-[4px]"}>
                <OrangePlus />
                {t}
              </div>
            ))}
          </div>
          <div className={rule + " mt-[12px] w-[131px]"} />
          <div className="mt-[8px] h-[21px] pl-[2px]">Search :</div>
          <div className="ml-px mt-[5px] flex h-[25px] w-[129px] gap-px">
            <div className="flex w-[99px] rounded-[3px] border border-[#9b8d77] p-px">
              <div className="flex flex-1 items-center rounded-[2px] border border-[#ee7d64] bg-linear-to-b from-[#d3b3a3] to-[#c0a08c] pl-[4px]">
                <span className="flex-1">Customer</span>
                <div className="flex h-[21px] w-[20px] items-center justify-center border-l border-[#ab8672] bg-[#d8b8aa] pl-[3px] pt-[2px]">
                  <Tri tone="#6f6b62" w={7} />
                </div>
              </div>
            </div>
            <div className={btn + " flex-1"}>OK</div>
          </div>
          <div className={rule + " mt-[12px] w-[131px]"} />
          <div className={btn + " ml-px mt-[12px] h-[29px] w-[129px]"}>Statistic</div>
        </div>
        <div className="flex-1 border-l border-white pl-[24px] pt-[90px]">
          <div className="flex h-[24px] items-center">
            <span className="w-[190px] whitespace-nowrap pt-[2px] text-[16px] font-bold tracking-[0.07px]">CUSTOMER SEARCH</span>
            <div className={rule + " mt-[11px] w-[571px]"} />
          </div>
          {fields.map(([label, mt, mb]) => (
            <div key={label} className={"flex h-[25px] items-center " + mt}>
              <span className={"w-[111px] " + mb}>{label}</span>
              <div className={field} />
            </div>
          ))}
          <div className="mt-[10px] flex">
            <span className="mt-[-1px] w-[111px]">Address :</span>
            <div className="h-[59px] w-[239px] rounded-[3px] border border-[#a2937a] bg-white" />
          </div>
          <div className={btn + " ml-[261px] mt-[11px] h-[25px] w-[91px]"}>Search</div>
        </div>
      </div>
      <div className="flex-1 border-t border-[#ddd7cb]" />
    </div>
  );
}

/* ---------- task bar ---------- */

function TaskBar() {
  const tabs: [React.ReactNode, string][] = [
    [<QtIcon key="q" s={17} />, "Qt Designer"],
    [<Firefox key="f" s={17} />, "qt4 desinger image vie…"],
    [
      <Svg key="d" w={17} h={17}>
        <path d="M3 1h8l3 3v12H3z" fill="#9a9a98" stroke="#6b6b69" />
        <path d="M5 5h6M5 8h3M5 11h7M5 13.500h7" stroke="#4a5560" />
        <rect x="8.500" y="6.500" width="4" height="4" fill="#56789a" />
      </Svg>,
      "[proj-fall2010.doc - Ope…",
    ],
    [
      <Svg key="b" w={17} h={17}>
        <path d="M1 1h6v15H1z" fill="#77726c" />
        <path d="M3 4h13v12H3z" fill="#9c5a40" />
        <path d="M8 4v11l3-3 2 4 2-1-2-4h3z" fill="#a9a6a0" />
      </Svg>,
      "[Downloads - File Brow…",
    ],
  ];
  return (
    <div className="flex h-[24px] items-center bg-linear-to-b from-[#565550] to-[#3a3935] text-[#dfdbd2]">
      <Svg w={23} h={20} className="ml-px">
        <rect x=".5" y="1.500" width="21" height="18" rx="1" fill="#a33e9c" stroke="#5d3358" />
        <rect x="1" y="1" width="21" height="3" fill="#e5e1d8" />
        <circle cx="14" cy="11" r="6" fill="#c46abf" opacity=".7" />
        <path d="M3 6h3v3H3zM3 11h3v3H3z" fill="#eee" />
      </Svg>
      <Handle tone="#2b2a27" className="ml-[3px]" />
      <div className="ml-[4px] flex gap-[2px]">
        {tabs.map(([icon, label], i) => (
          <div
            key={label}
            className={
              i === 0
                ? "flex h-[22px] w-[199px] items-center rounded-[2px] border border-[#6b6253] bg-linear-to-b from-[#7d705f] to-[#6b6051] pl-[4px] text-white"
                : "flex h-[22px] w-[199px] items-center rounded-[2px] border border-[#45433f] bg-linear-to-b from-[#464540] to-[#33322f] pl-[3px] tracking-[0.04px]"
            }
          >
            {icon}
            <span className="pl-[7px] pb-px">{label}</span>
          </div>
        ))}
      </div>
      <div className="ml-auto flex h-[22px]">
        <div className="flex w-[39px] items-end justify-center border border-white bg-[#b5a793] pb-px">
          <div className="h-[16px] w-[21px] border border-white bg-[#ded5c8]" />
        </div>
        <div className="w-[39px] border-r-2 border-[#3e3d39] bg-[#2a2a28]" />
        <div className="w-[39px] border-r-2 border-[#3e3d39] bg-[#2a2a28]" />
        <div className="w-[39px] bg-[#2a2a28]" />
      </div>
      <Svg w={22} h={23} className="ml-[4px] mr-px">
        <path d="M2 3h17l-2 18H4z" fill="#8d8f8c" stroke="#5c5e5b" />
        <ellipse cx="10.500" cy="3.500" rx="8.500" ry="2.500" fill="#b5b7b4" stroke="#6b6d6a" />
        <path d="M5 8l3 4 4-5 4 6M6 18l3-5 4 5 2-4" stroke="#d8dad7" fill="none" />
        <path d="M14 22l3-4 4 4z" fill="#eee" />
      </Svg>
    </div>
  );
}

export default function App() {
  return (
    <div className="flex h-[1080px] w-[1920px] flex-col overflow-hidden bg-[#efebe3] font-['DejaVu_Sans',sans-serif] text-[13px] leading-[18px] text-[#3c3b37]">
      <Defs />
      <TopPanel />
      <TitleBar />
      <MenuBar />
      <ToolBar />
      <div className="flex h-[920px]">
        <WidgetBox />
        <div className="relative flex-1 overflow-hidden bg-[#c8c3bc]">
          <DesignWindow />
          <PreviewWindow />
          <Svg w={13} h={21} className="absolute left-[450px] top-[558px]">
            <path d="M1 1v16l3.800-3.500L7.500 20l2.800-1.200-2.700-6H12z" fill="#fff" stroke="#222" strokeWidth="1.100" />
          </Svg>
        </div>
        <PropertyEditor />
      </div>
      <div className="h-[22px] border-t border-[#d8cfc0] bg-[#efebe3]" />
      <TaskBar />
    </div>
  );
}
